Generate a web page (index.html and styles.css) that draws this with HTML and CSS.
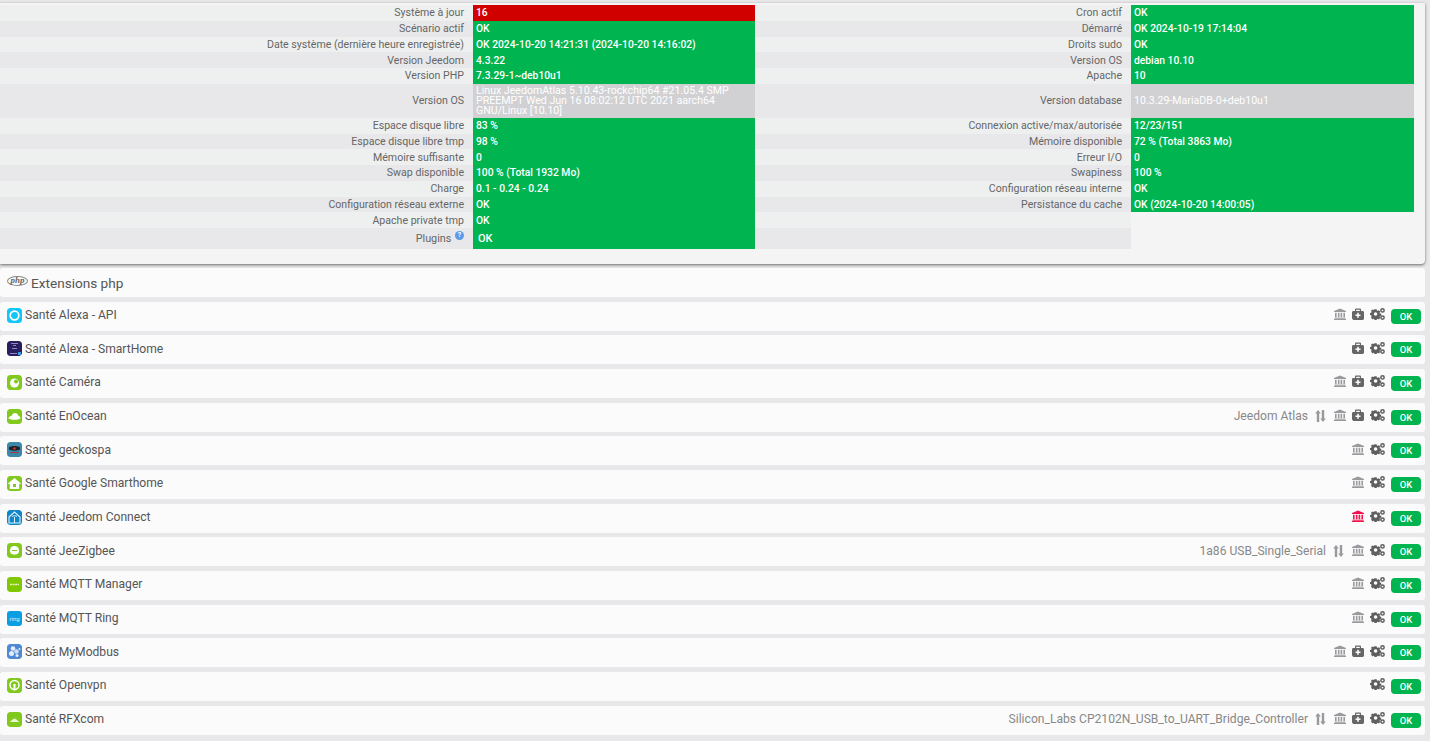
FILE: index.html
```html
<!DOCTYPE html>
<html lang="fr">

<head>
    <meta charset="UTF-8">
    <meta name="viewport" content="width=device-width, initial-scale=1.0">
    <title>Santé Jeedom</title>
    <link rel="stylesheet" href="styles.css">
</head>

<body>
    <svg class="sprites" width="0" height="0" aria-hidden="true">
        <symbol id="i-bank" viewBox="0 0 12 12">
            <path d="M6 .5 12 3v1H0V3zM1 4.800h1.600v4.400H1zM3.900 4.800h1.600v4.400H3.900zM6.600 4.800h1.600v4.400H6.600zM9.400 4.800H11v4.400H9.400zM.5 9.800h11v.9H.5zM0 11h12v1H0z" />
        </symbol>
        <symbol id="i-medkit" viewBox="0 0 12 12">
            <path fill-rule="evenodd" d="M4 .5h4a1 1 0 0 1 1 1v1.500h1.600c.8 0 1.400.6 1.400 1.400v6.200c0 .8-.6 1.400-1.400 1.400H1.400C.6 11.500 0 10.900 0 10.100V4.400C0 3.600.6 3 1.400 3H3V1.500a1 1 0 0 1 1-1zm.2 1.200V3h3.600V1.700zM5.200 4.800v1.700H3.500v1.600h1.700v1.700h1.600V8.100h1.700V6.500H6.800V4.800z" />
        </symbol>
        <symbol id="i-cogs" viewBox="0 0 15 12">
            <path fill-rule="evenodd" d="M4 1.700h2l.3 1.200.9.400 1.100-.6 1.300 1.300-.6 1.100.4.900 1.200.3v2l-1.200.3-.4.900.6 1.100-1.300 1.300-1.100-.6-.9.400-.3 1.200H4l-.3-1.200-.9-.4-1.100.6L.4 9.800l.6-1.100-.4-.9L-.6 7.500v-2l1.200-.3.4-.9-.6-1.100 1.300-1.300 1.100.6.900-.4zM5 4.700a1.800 1.800 0 1 0 0 3.600 1.800 1.800 0 0 0 0-3.600z" transform="translate(.6 -.5)" />
            <path fill-rule="evenodd" d="M12.500 0a2.400 2.400 0 1 1 0 4.800 2.400 2.400 0 0 1 0-4.800zm0 1.500a.9.900 0 1 0 0 1.800.9.900 0 0 0 0-1.800zM12.500 7.200a2.400 2.400 0 1 1 0 4.800 2.400 2.400 0 0 1 0-4.800zm0 1.500a.9.900 0 1 0 0 1.800.9.900 0 0 0 0-1.800z" />
        </symbol>
        <symbol id="i-sort" viewBox="0 0 11 12">
            <path d="M3 0 5.800 3.500H4.200V12H1.800V3.500H.2zM8 12 5.200 8.500h1.600V0h2.400v8.500h1.600z" />
        </symbol>
    </svg>

    <div class="health-panel">
        <table class="health-table">
            <colgroup>
                <col class="col-label">
                <col class="col-value">
                <col class="col-label2">
                <col class="col-value2">
            </colgroup>
            <tr>
                <td class="label">Système à jour</td>
                <td class="value bad">16</td>
                <td class="label">Cron actif</td>
                <td class="value ok">OK</td>
            </tr>
            <tr>
                <td class="label">Scénario actif</td>
                <td class="value ok">OK</td>
                <td class="label">Démarré</td>
                <td class="value ok">OK 2024-10-19 17:14:04</td>
            </tr>
            <tr>
                <td class="label">Date système (dernière heure enregistrée)</td>
                <td class="value ok">OK 2024-10-20 14:21:31 (2024-10-20 14:16:02)</td>
                <td class="label">Droits sudo</td>
                <td class="value ok">OK</td>
            </tr>
            <tr>
                <td class="label">Version Jeedom</td>
                <td class="value ok">4.3.22</td>
                <td class="label">Version OS</td>
                <td class="value ok">debian 10.10</td>
            </tr>
            <tr>
                <td class="label">Version PHP</td>
                <td class="value ok">7.3.29-1~deb10u1</td>
                <td class="label">Apache</td>
                <td class="value ok">10</td>
            </tr>
            <tr class="info-row">
                <td class="label">Version OS</td>
                <td class="value info">Linux JeedomAtlas 5.10.43-rockchip64 #21.05.4 SMP PREEMPT Wed Jun 16 08:02:12 UTC 2021 aarch64 GNU/Linux [10.10]</td>
                <td class="label">Version database</td>
                <td class="value info">10.3.29-MariaDB-0+deb10u1</td>
            </tr>
            <tr>
                <td class="label">Espace disque libre</td>
                <td class="value ok">83 %</td>
                <td class="label">Connexion active/max/autorisée</td>
                <td class="value ok">12/23/151</td>
            </tr>
            <tr>
                <td class="label">Espace disque libre tmp</td>
                <td class="value ok">98 %</td>
                <td class="label">Mémoire disponible</td>
                <td class="value ok">72 % (Total 3863 Mo)</td>
            </tr>
            <tr>
                <td class="label">Mémoire suffisante</td>
                <td class="value ok">0</td>
                <td class="label">Erreur I/O</td>
                <td class="value ok">0</td>
            </tr>
            <tr>
                <td class="label">Swap disponible</td>
                <td class="value ok">100 % (Total 1932 Mo)</td>
                <td class="label">Swapiness</td>
                <td class="value ok">100 %</td>
            </tr>
            <tr>
                <td class="label">Charge</td>
                <td class="value ok">0.1 - 0.24 - 0.24</td>
                <td class="label">Configuration réseau interne</td>
                <td class="value ok">OK</td>
            </tr>
            <tr>
                <td class="label">Configuration réseau externe</td>
                <td class="value ok">OK</td>
                <td class="label">Persistance du cache</td>
                <td class="value ok">OK (2024-10-20 14:00:05)</td>
            </tr>
            <tr>
                <td class="label">Apache private tmp</td>
                <td class="value ok">OK</td>
                <td class="label"></td>
                <td></td>
            </tr>
            <tr class="plugins-row">
                <td class="label">Plugins <span class="help">?</span></td>
                <td class="value ok">OK</td>
                <td class="label"></td>
                <td></td>
            </tr>
        </table>
    </div>

    <div class="plugin-list">
        <div class="plugin-head">
            <span class="php-logo">php</span>
            <span>Extensions php</span>
        </div>

        <div class="plugin-row">
            <svg class="plugin-icon" viewBox="0 0 15 15"><rect width="15" height="15" rx="3" fill="#12c6f7" /><circle cx="7.500" cy="7.500" r="4.300" fill="none" stroke="#fff" stroke-width="1.700" /></svg>
            <span class="plugin-name">Santé Alexa - API</span>
            <span class="plugin-tools">
                <svg class="tool"><use href="#i-bank" /></svg>
                <svg class="tool dark"><use href="#i-medkit" /></svg>
                <svg class="tool-cogs"><use href="#i-cogs" /></svg>
                <span class="badge">OK</span>
            </span>
        </div>

        <div class="plugin-row">
            <svg class="plugin-icon" viewBox="0 0 15 15"><rect width="15" height="15" rx="3" fill="#2a1f5e" /><path d="M4 2.500h7M6 4.500h3M5 7.500h5M3 12.500h7" stroke="#8d88c4" fill="none" /><rect x="11" y="11" width="3" height="3" fill="#3f9be0" /></svg>
            <span class="plugin-name">Santé Alexa - SmartHome</span>
            <span class="plugin-tools">
                <svg class="tool dark"><use href="#i-medkit" /></svg>
                <svg class="tool-cogs"><use href="#i-cogs" /></svg>
                <span class="badge">OK</span>
            </span>
        </div>

        <div class="plugin-row">
            <svg class="plugin-icon" viewBox="0 0 15 15"><rect width="15" height="15" rx="3" fill="#82c91e" /><circle cx="7.500" cy="8" r="4.500" fill="#fff" /><circle cx="9" cy="6.500" r="2" fill="#82c91e" /></svg>
            <span class="plugin-name">Santé Caméra</span>
            <span class="plugin-tools">
                <svg class="tool"><use href="#i-bank" /></svg>
                <svg class="tool dark"><use href="#i-medkit" /></svg>
                <svg class="tool-cogs"><use href="#i-cogs" /></svg>
                <span class="badge">OK</span>
            </span>
        </div>

        <div class="plugin-row">
            <svg class="plugin-icon" viewBox="0 0 15 15"><rect width="15" height="15" rx="3" fill="#82c91e" /><path d="M1.500 9.500C2 7.500 3.500 7 4.500 7 5.200 5 6.500 4 8 4c1.800 0 3 1.200 3.300 2.800 1.200.2 2.200 1.300 2.200 2.700-3 1.800-9 1.800-12 0z" fill="#fff" /></svg>
            <span class="plugin-name">Santé EnOcean</span>
            <span class="plugin-tools">
                <span class="device">Jeedom Atlas</span>
                <svg class="tool sort"><use href="#i-sort" /></svg>
                <svg class="tool"><use href="#i-bank" /></svg>
                <svg class="tool dark"><use href="#i-medkit" /></svg>
                <svg class="tool-cogs"><use href="#i-cogs" /></svg>
                <span class="badge">OK</span>
            </span>
        </div>

        <div class="plugin-row">
            <svg class="plugin-icon" viewBox="0 0 15 15"><rect width="15" height="15" rx="3" fill="#3d87a9" /><path d="M2 5.500c2-2 9-2 11 0v2c-2 1.500-9 1.500-11 0z" fill="#1d2328" /><circle cx="7.500" cy="6.500" r="1.200" fill="#d8342c" /><path d="M3.500 10.500h8" stroke="#a8333a" /></svg>
            <span class="plugin-name">Santé geckospa</span>
            <span class="plugin-tools">
                <svg class="tool"><use href="#i-bank" /></svg>
                <svg class="tool-cogs"><use href="#i-cogs" /></svg>
                <span class="badge">OK</span>
            </span>
        </div>

        <div class="plugin-row">
            <svg class="plugin-icon" viewBox="0 0 15 15"><rect width="15" height="15" rx="3" fill="#82c91e" /><path fill-rule="evenodd" d="M7.500 2 14 7.500l-.8.800-1-.8V13H2.800V7.500l-1 .8L1 7.500zM6 8v3h3V8z" fill="#fff" /></svg>
            <span class="plugin-name">Santé Google Smarthome</span>
            <span class="plugin-tools">
                <svg class="tool"><use href="#i-bank" /></svg>
                <svg class="tool-cogs"><use href="#i-cogs" /></svg>
                <span class="badge">OK</span>
            </span>
        </div>

        <div class="plugin-row">
            <svg class="plugin-icon" viewBox="0 0 15 15"><rect width="15" height="15" rx="3" fill="#1186c7" /><path d="M2 7 7.500 2 13 7v6H2z" fill="none" stroke="#dff1fb" stroke-width="1.100" /><path d="M7.500 7v6M5 6.500c1.500-1 3.500-1 5 0" fill="none" stroke="#dff1fb" /></svg>
            <span class="plugin-name">Santé Jeedom Connect</span>
            <span class="plugin-tools">
                <svg class="tool alert"><use href="#i-bank" /></svg>
                <svg class="tool-cogs"><use href="#i-cogs" /></svg>
                <span class="badge">OK</span>
            </span>
        </div>

        <div class="plugin-row">
            <svg class="plugin-icon" viewBox="0 0 15 15"><rect width="15" height="15" rx="3" fill="#82c91e" /><path d="M3 7.500a4.500 4.500 0 0 1 9 0c0 2.500-1 4-4.500 4S3 10 3 7.500z" fill="#fff" /><path d="M5 7.500h5" stroke="#82c91e" /></svg>
            <span class="plugin-name">Santé JeeZigbee</span>
            <span class="plugin-tools">
                <span class="device">1a86 USB_Single_Serial</span>
                <svg class="tool sort"><use href="#i-sort" /></svg>
                <svg class="tool"><use href="#i-bank" /></svg>
                <svg class="tool-cogs"><use href="#i-cogs" /></svg>
                <span class="badge">OK</span>
            </span>
        </div>

        <div class="plugin-row">
            <svg class="plugin-icon" viewBox="0 0 15 15"><rect width="15" height="15" rx="3" fill="#7fc800" /><path d="M3 7.500h9" stroke="#e6f6c6" stroke-width="1.600" stroke-dasharray="2 .6" /></svg>
            <span class="plugin-name">Santé MQTT Manager</span>
            <span class="plugin-tools">
                <svg class="tool"><use href="#i-bank" /></svg>
                <svg class="tool-cogs"><use href="#i-cogs" /></svg>
                <span class="badge">OK</span>
            </span>
        </div>

        <div class="plugin-row">
            <span class="plugin-icon ring-app">ring</span>
            <span class="plugin-name">Santé MQTT Ring</span>
            <span class="plugin-tools">
                <svg class="tool"><use href="#i-bank" /></svg>
                <svg class="tool-cogs"><use href="#i-cogs" /></svg>
                <span class="badge">OK</span>
            </span>
        </div>

        <div class="plugin-row">
            <svg class="plugin-icon" viewBox="0 0 15 15"><rect width="15" height="15" rx="3" fill="#4f88d4" /><circle cx="6" cy="4.500" r="2.300" fill="#e4eefa" /><circle cx="4.500" cy="9.500" r="2.500" fill="#e4eefa" /><circle cx="9.500" cy="7.500" r="2.200" fill="#cfe0f6" /><circle cx="10" cy="11.500" r="1.500" fill="#e4eefa" /><circle cx="12.500" cy="5" r="1" fill="#e4eefa" /></svg>
            <span class="plugin-name">Santé MyModbus</span>
            <span class="plugin-tools">
                <svg class="tool"><use href="#i-bank" /></svg>
                <svg class="tool dark"><use href="#i-medkit" /></svg>
                <svg class="tool-cogs"><use href="#i-cogs" /></svg>
                <span class="badge">OK</span>
            </span>
        </div>

        <div class="plugin-row">
            <svg class="plugin-icon" viewBox="0 0 15 15"><rect width="15" height="15" rx="3" fill="#82c91e" /><circle cx="7.500" cy="7" r="4.500" fill="none" stroke="#fff" stroke-width="1.500" /><path d="M6.300 6h2.400L8.300 12.500H6.700z" fill="#fff" /></svg>
            <span class="plugin-name">Santé Openvpn</span>
            <span class="plugin-tools">
                <svg class="tool-cogs"><use href="#i-cogs" /></svg>
                <span class="badge">OK</span>
            </span>
        </div>

        <div class="plugin-row">
            <svg class="plugin-icon" viewBox="0 0 15 15"><rect width="15" height="15" rx="3" fill="#82c91e" /><path d="M1 10c1.500 0 2.500-.5 3.500-1.500C5.500 7.500 6.500 6.500 7.500 6.500s2 1 3 2S12.500 10 14 10z" fill="#e9f7d2" /></svg>
            <span class="plugin-name">Santé RFXcom</span>
            <span class="plugin-tools">
                <span class="device">Silicon_Labs CP2102N_USB_to_UART_Bridge_Controller</span>
                <svg class="tool sort"><use href="#i-sort" /></svg>
                <svg class="tool"><use href="#i-bank" /></svg>
                <svg class="tool dark"><use href="#i-medkit" /></svg>
                <svg class="tool-cogs"><use href="#i-cogs" /></svg>
                <span class="badge">OK</span>
            </span>
        </div>
    </div>
</body>

</html>
```

FILE: styles.css
```css
html,
body {
    margin: 0;
    height: 741px;
    overflow: hidden;
}

body {
    font-family: Roboto, "Liberation Sans", sans-serif;
    background-color: #e8e8ea;
    color: #555;
    padding-top: 3px;
    box-sizing: border-box;
}

.sprites {
    position: absolute;
}

/* top health table */
.health-panel {
    width: 1425px;
    height: 261px;
    padding-top: 2px;
    box-sizing: border-box;
    background-color: #f4f4f4;
    border-radius: 0 0 4px 0;
    box-shadow: 0 1px 3px rgba(0, 0, 0, 0.55);
}

.health-table {
    width: 1414px;
    table-layout: fixed;
    border-collapse: collapse;
    font-size: 10.6px;
}

.col-label {
    width: 473px;
}

.col-value {
    width: 282px;
}

.col-label2 {
    width: 376px;
}

.col-value2 {
    width: 283px;
}

.health-table tr {
    height: 15.75px;
}

.health-table td {
    padding: 1px 9px 0 3px;
    line-height: 10px;
}

.health-table tr:nth-child(odd) .label {
    background-color: #eef0f0;
}

.health-table tr:nth-child(even) .label {
    background-color: #e8e8ea;
}

.health-table .label {
    text-align: right;
    color: #666;
}

.health-table .value {
    color: #fff;
    font-size: 10.3px;
    font-weight: 500;
}

.health-table .ok {
    background-color: #00b44f;
}

.health-table .bad {
    background-color: #d10000;
}

.health-table .info-row {
    height: 34px;
}

.health-table .info-row td {
    padding-top: 0;
}

.health-table .info-row .label,
.health-table .info {
    background-color: #d1d1d3;
    font-weight: 400;
}

.health-table .info {
    font-size: 10.6px;
}

.health-table .plugins-row {
    height: 21px;
    font-size: 10.8px;
}

.health-table .plugins-row td {
    padding-top: 0;
    padding-bottom: 2px;
}

.health-table .plugins-row .value {
    padding-left: 5px;
    padding-bottom: 0;
    font-size: 11px;
}

.help {
    display: inline-block;
    width: 9px;
    height: 9px;
    margin-left: 1px;
    border-radius: 50%;
    background-color: #5b9bea;
    color: #fff;
    font-size: 7px;
    font-weight: 700;
    line-height: 9px;
    text-align: center;
    vertical-align: 5px;
}

/* plugin rows */
.plugin-list {
    display: flex;
    flex-direction: column;
    gap: 4.67px;
    width: 1425px;
    margin-top: 4px;
}

.plugin-head,
.plugin-row {
    display: flex;
    align-items: center;
    flex: none;
    height: 29px;
    padding: 0 4px 2px 7px;
    box-sizing: border-box;
    background-color: #fbfbfb;
    border-radius: 3px;
    font-size: 12.1px;
}

.plugin-head {
    padding-bottom: 0;
    font-size: 13.6px;
}

.php-logo {
    width: 21px;
    height: 10px;
    margin: -4px 3px 0 0;
    border: 1px solid #888;
    border-radius: 50%;
    box-sizing: border-box;
    color: #666;
    font-family: "Liberation Serif", serif;
    font-size: 9px;
    font-style: italic;
    font-weight: 700;
    line-height: 7px;
    text-align: center;
}

.plugin-icon {
    display: block;
    flex: none;
    width: 15px;
    height: 15px;
    margin-right: 3px;
    border-radius: 3px;
}

.plugin-name {
    flex: 1;
}

.plugin-tools {
    display: flex;
    align-items: center;
    gap: 6px;
    margin-top: 2px;
}

.tool,
.tool-cogs {
    margin-bottom: 4px;
}

.tool {
    width: 12px;
    height: 12px;
    fill: #9a9a9e;
}

.tool.dark {
    fill: #666;
}

.tool.alert {
    fill: #f0134d;
}

.tool.sort {
    width: 11px;
    margin-left: 2px;
    margin-right: 2px;
    margin-bottom: 2px;
}

.tool-cogs {
    width: 15px;
    height: 12px;
    fill: #5f5f5f;
}

.device {
    margin: 0 -1px 2px 0;
    color: #888;
    font-size: 12.1px;
}

.badge {
    width: 30px;
    height: 15px;
    border-radius: 4px;
    background-color: #00b44f;
    color: #fff;
    font-size: 9.5px;
    font-weight: 500;
    line-height: 15px;
    text-align: center;
}

.ring-app {
    background-color: #0a9ee2;
    color: #d7f0fb;
    font-size: 6px;
    line-height: 15px;
    text-align: center;
}
```
